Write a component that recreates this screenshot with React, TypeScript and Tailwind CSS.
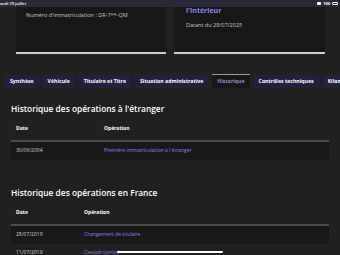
import React from "react";

const tabs = [
  { name: "Synthèse" },
  { name: "Véhicule" },
  { name: "Titulaire et Titre" },
  { name: "Situation administrative" },
  { name: "Historique", active: true },
  { name: "Contrôles techniques" },
  { name: "Kilométrage" },
];

const etranger = [{ date: "30/06/2004", op: "Première immatriculation à l'étranger" }];
const france = [
  { date: "28/07/2019", op: "Changement de titulaire" },
  { date: "11/07/2019", op: "Cession (vente)" },
];

function HistoryTable({ rows, wide }: { rows: { date: string; op: string }[]; wide?: boolean }) {
  const col = wide ? "w-[93px] pl-[5px]" : "w-[73px] pl-[5px]";
  return (
    <div className="mx-[11px]">
      <div className="flex h-[22px] items-center text-[5px] font-bold text-white">
        <span className={col}>Date</span>
        <span>Opération</span>
      </div>
      <div className="h-[2px] bg-[#4a4a4a]" />
      {rows.map((row, i) => (
        <div
          key={row.date}
          className={`flex h-[18px] items-center text-[5px] ${i % 2 === 0 ? "bg-[#181818]" : ""}`}
        >
          <span className={`${col} text-[#cecece]`}>{row.date}</span>
          <span className="text-[#8585f6]">{row.op}</span>
        </div>
      ))}
    </div>
  );
}

export default function App() {
  return (
    <div
      className="relative h-[255px] w-[340px] overflow-hidden bg-[#202020]"
      style={{ fontFamily: '"Open Sans", "Liberation Sans", sans-serif' }}
    >
      {/* Status bar */}
      <div className="flex h-[7px] items-center justify-between bg-[#2b2839] text-[4px] text-white">
        <span className="-ml-[3px] font-semibold">mardi 29 juillet</span>
        <div className="flex items-center gap-[2px] pr-[2px]">
          <span className="h-[3px] w-[4px] rounded-[1px] bg-white" />
          <span className="font-bold">100</span>
          <span className="h-[3px] w-[6px] rounded-[1px] border-[0.5px] border-white" />
        </div>
      </div>

      {/* Cards */}
      <div className="flex gap-[8px] pl-[16px]">
        <div className="flex h-[47px] w-[150px] flex-col border-b-2 border-[#cfcfcf] bg-[#171717] px-[10px] pt-[4px]">
          <p className="text-[5.5px] text-[#c8c8c8]">Numéro d'immatriculation : DR-7**-QM</p>
        </div>
        <div className="flex h-[47px] w-[151px] flex-col border-b-2 border-[#cfcfcf] bg-[#171717] px-[12px]">
          <p className="-mt-[1px] text-[7px] font-bold text-[#8585f6]">l'Intérieur</p>
          <p className="mt-[4px] text-[5.5px] text-[#c8c8c8]">Datant du 28/07/2025</p>
        </div>
      </div>

      {/* Tabs */}
      <div className="mt-[20px] flex items-end gap-[4px] pl-[5px] whitespace-nowrap">
        {tabs.map((t) =>
          t.active ? (
            <div
              key={t.name}
              className="flex h-[14px] items-center border-t border-[#9a9a9a] bg-[#171717] px-[5px] text-[5.2px] font-bold text-[#8f8dc4]"
            >
              {t.name}
            </div>
          ) : (
            <div
              key={t.name}
              className="flex h-[13px] items-center bg-[#21213f] px-[5px] text-[5.2px] font-bold text-white"
            >
              {t.name}
            </div>
          )
        )}
      </div>

      {/* Historique étranger */}
      <h2 className="mt-[15px] pl-[11px] text-[8.4px] leading-[11px] font-semibold text-white">
        Historique des opérations à l'étranger
      </h2>
      <div className="mt-[4px]">
        <HistoryTable rows={etranger} wide />
      </div>

      {/* Historique France */}
      <h2 className="mt-[27px] pl-[11px] text-[8.4px] leading-[11px] font-semibold text-white">
        Historique des opérations en France
      </h2>
      <div className="mt-[4px]">
        <HistoryTable rows={france} />
      </div>

      {/* Home indicator */}
      <div className="absolute bottom-[2px] left-[117px] h-[2px] w-[106px] rounded-full bg-white" />
    </div>
  );
}
